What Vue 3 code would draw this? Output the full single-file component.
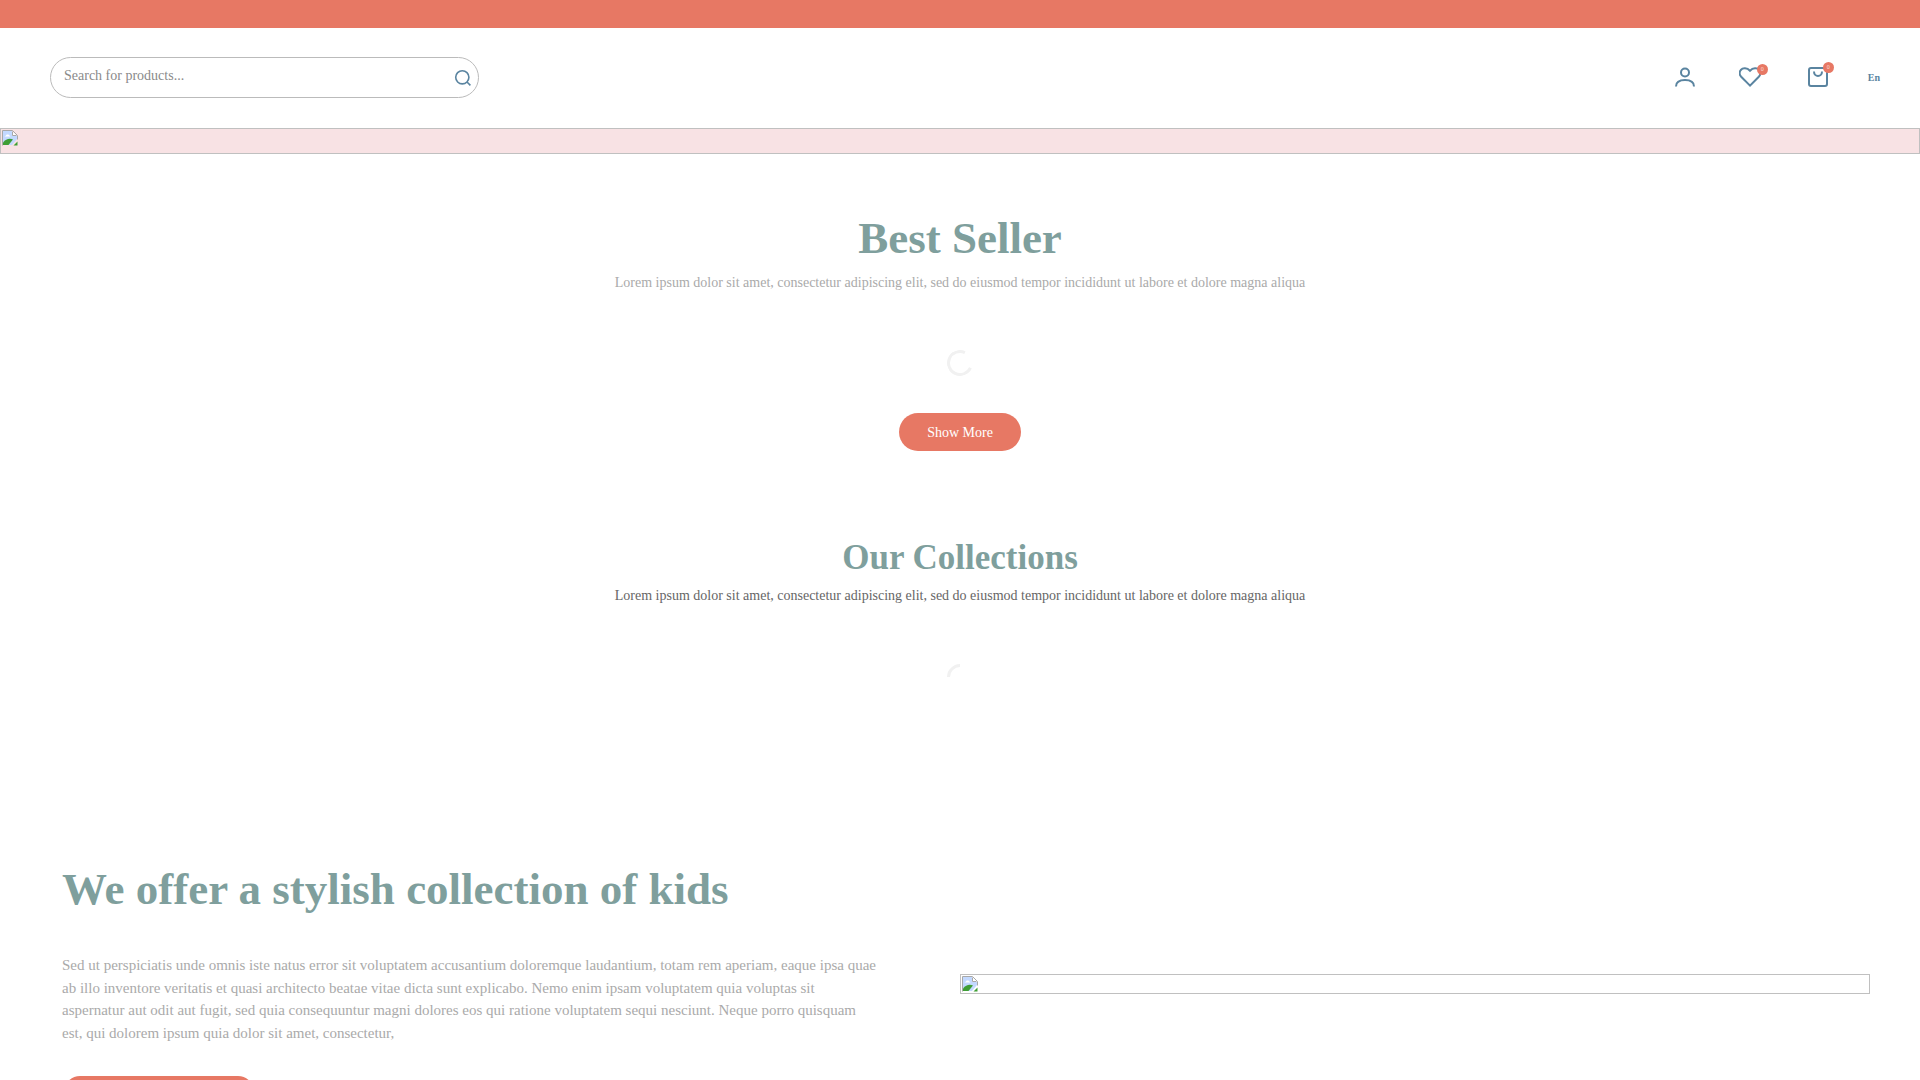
<template>
  <div class="page">
    <div class="top-bar"></div>

    <header class="header">
      <div class="search">
        <input class="search-input" type="text" placeholder="Search for products...">
        <svg class="search-icon" viewBox="0 0 18 18" width="18" height="18">
          <circle cx="8.3" cy="8.3" r="6.6" />
          <path d="M13 13l3.4 3.4" />
        </svg>
      </div>

      <nav class="header-icons">
        <a class="icon user">
          <svg viewBox="0 0 20 20" width="20" height="20">
            <circle cx="10" cy="5.5" r="4" />
            <path d="M1 19.5c0-4.5 3.5-6.5 9-6.5s9 2 9 6.5" />
          </svg>
        </a>
        <a class="icon wish">
          <svg viewBox="0 0 22 20" width="22" height="20">
            <path d="M11 18.6L2.2 9.8A5.3 5.3 0 0 1 1.8 3C3.8.6 8 .6 11 3.8c3-3.2 7.2-3.2 9.2-.8a5.3 5.3 0 0 1-.4 6.8z" />
          </svg>
          <span class="badge">0</span>
        </a>
        <a class="icon bag">
          <svg viewBox="0 0 20 20" width="20" height="20">
            <rect x="1" y="1" width="18" height="18" rx="2" />
            <path d="M6 4.5c0 6 8 6 8 0" />
          </svg>
          <span class="badge">0</span>
        </a>
        <span class="lang">En</span>
      </nav>
    </header>

    <div class="banner broken">
      <svg class="broken-icon" viewBox="0 0 16 16" width="16" height="16">
        <path d="M.5 15.5V.5h10l5 5v4" fill="none" stroke="#a8a8a8" />
        <path d="M1 1h9v5h5v3l-5 6H1z" fill="#c3d9ff" />
        <path d="M10.5 1.5v4h4" fill="#fff" stroke="#a8a8a8" />
        <path d="M4 5.5c0-1.5 3-1.500 3.5 0l1 1h-6z" fill="#fff" />
        <path d="M1 15v-2.500C4 8.500 8 8 11 9.500L6.500 15z" fill="#3f9e35" />
        <path d="M11.500 15.500l4-4v4z" fill="#3f9e35" />
      </svg>
    </div>

    <section class="best">
      <h2 class="title big">Best Seller</h2>
      <p class="sub">Lorem ipsum dolor sit amet, consectetur adipiscing elit, sed do eiusmod tempor incididunt ut labore et dolore magna aliqua</p>
      <div class="spinner"></div>
      <button class="btn">Show More</button>
    </section>

    <section class="collections">
      <h2 class="title">Our Collections</h2>
      <p class="sub dark">Lorem ipsum dolor sit amet, consectetur adipiscing elit, sed do eiusmod tempor incididunt ut labore et dolore magna aliqua</p>
      <div class="spinner arc"></div>
    </section>

    <section class="offer">
      <h2 class="offer-title">We offer a stylish collection of kids</h2>
      <div class="offer-row">
        <div class="offer-text">
          <p>Sed ut perspiciatis unde omnis iste natus error sit voluptatem accusantium doloremque laudantium, totam rem aperiam, eaque ipsa quae ab illo inventore veritatis et quasi architecto beatae vitae dicta sunt explicabo. Nemo enim ipsam voluptatem quia voluptas sit aspernatur aut odit aut fugit, sed quia consequuntur magni dolores eos qui ratione voluptatem sequi nesciunt. Neque porro quisquam est, qui dolorem ipsum quia dolor sit amet, consectetur,</p>
          <div class="btn wide"></div>
        </div>
        <div class="offer-image broken">
          <svg class="broken-icon" viewBox="0 0 16 16" width="16" height="16">
            <path d="M.5 15.5V.5h10l5 5v4" fill="none" stroke="#a8a8a8" />
            <path d="M1 1h9v5h5v3l-5 6H1z" fill="#c3d9ff" />
            <path d="M10.5 1.5v4h4" fill="#fff" stroke="#a8a8a8" />
            <path d="M4 5.5c0-1.5 3-1.500 3.5 0l1 1h-6z" fill="#fff" />
            <path d="M1 15v-2.500C4 8.500 8 8 11 9.500L6.500 15z" fill="#3f9e35" />
            <path d="M11.500 15.500l4-4v4z" fill="#3f9e35" />
          </svg>
        </div>
      </div>
    </section>
  </div>
</template>

<script setup>
</script>

<style>
html, body {
  margin: 0;
  overflow: hidden;
  height: 1080px;
  background: #fff;
}
</style>

<style scoped>
.page {
  font-family: "Liberation Serif", "Times New Roman", serif;
  color: #555;
  height: 1080px;
  overflow: hidden;
}

.top-bar {
  height: 28px;
  background: #e77864;
}

.header {
  height: 100px;
  display: flex;
  align-items: center;
  justify-content: space-between;
  padding: 0 40px 2px 50px;
  box-sizing: border-box;
}

.search {
  position: relative;
  width: 429px;
  height: 41px;
}

.search-input {
  width: 100%;
  height: 100%;
  box-sizing: border-box;
  border: 1px solid #bbb;
  border-radius: 21px;
  padding: 0 40px 2px 13px;
  font-family: inherit;
  font-size: 14px;
  outline: none;
}

.search-input::placeholder {
  color: #8a8a8a;
  opacity: 1;
}

.search-icon {
  position: absolute;
  right: 7px;
  top: 12px;
  fill: none;
  stroke: #5a84a0;
  stroke-width: 1.6;
}

.header-icons {
  display: flex;
  align-items: center;
}

.icon {
  position: relative;
  display: block;
  line-height: 0;
}

.icon svg {
  fill: none;
  stroke: #5a84a0;
  stroke-width: 2;
}

.user {
  margin-right: 44px;
}

.wish {
  margin-right: 47px;
}

.bag {
  margin-right: 40px;
}

.badge {
  position: absolute;
  top: -5px;
  right: -6px;
  width: 11px;
  height: 11px;
  border-radius: 50%;
  background: #e77864;
  color: #fbdcd6;
  font-size: 6px;
  line-height: 11px;
  text-align: center;
}

.wish .badge {
  top: -3px;
  right: -7px;
}

.lang {
  font-size: 10px;
  font-weight: bold;
  color: #5a84a0;
}

.broken {
  box-sizing: border-box;
  border: 1px solid #c0c0c0;
  line-height: 0;
}

.broken-icon {
  margin: 1px 0 0 1px;
}

.banner {
  height: 26px;
  background: #f8e2e4;
}

.best {
  height: 383px;
  padding-top: 58px;
  box-sizing: border-box;
  text-align: center;
}

.collections {
  height: 326px;
  box-sizing: border-box;
  text-align: center;
}

.title {
  margin: 0;
  font-size: 35px;
  line-height: 42px;
  font-weight: bold;
  color: #7f9f9d;
}

.big {
  font-size: 45px;
  line-height: 52px;
}

.sub {
  margin: 9px 0 0;
  font-size: 14px;
  line-height: 20px;
  color: #aaa;
}

.sub.dark {
  color: #666;
  margin-top: 7px;
}

.spinner {
  width: 26px;
  height: 26px;
  box-sizing: border-box;
  margin: 57px auto 0;
  border: 3px solid #f1f1f1;
  border-right-color: transparent;
  border-radius: 50%;
  transform: rotate(-20deg);
}

.spinner.arc {
  border-color: #f1f1f1 transparent transparent transparent;
  margin-top: 58px;
  transform: rotate(-45deg);
}

.btn {
  display: block;
  margin: 37px auto 0;
  width: 122px;
  height: 38px;
  padding-top: 2px;
  border: none;
  border-radius: 19px;
  background: #e77864;
  color: #fff;
  font-family: inherit;
  font-size: 14px;
}

.offer {
  padding: 0 50px 0 62px;
}

.offer-title {
  margin: 0;
  font-size: 45px;
  line-height: 52px;
  font-weight: bold;
  color: #7f9f9d;
}

.offer-row {
  display: flex;
  justify-content: space-between;
  margin-top: 39px;
}

.offer-text {
  width: 816px;
}

.offer-text p {
  margin: 0;
  font-size: 15px;
  line-height: 22.5px;
  color: #aaa;
}

.wide {
  margin: 32px 0 0 2px;
  width: 190px;
  height: 38px;
  padding: 0;
  border-radius: 16px;
}

.offer-image {
  width: 910px;
  height: 20px;
  margin-top: 20px;
}
</style>
